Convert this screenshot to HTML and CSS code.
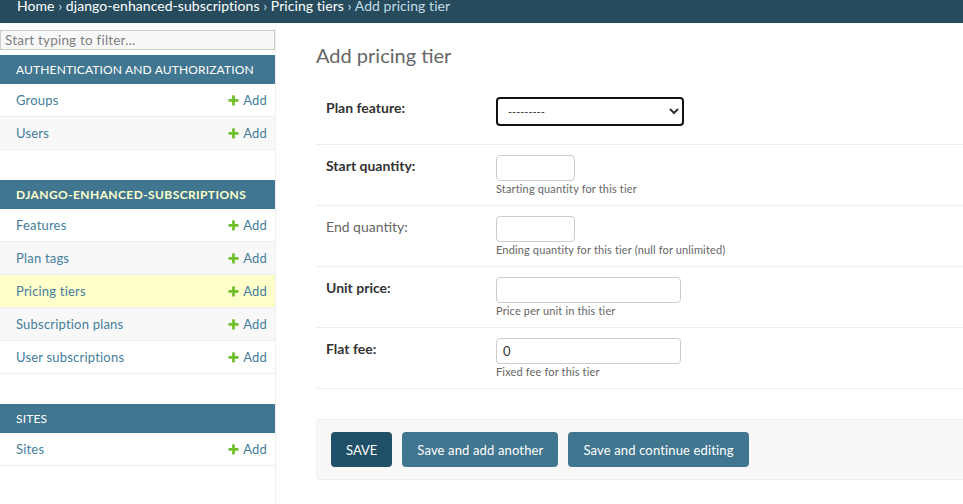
FILE: index.html
```html
<!DOCTYPE html>
<html lang="en">
<head>
<meta charset="utf-8">
<title>Add pricing tier</title>
<link rel="stylesheet" href="styles.css">
</head>
<body>
<div class="breadcrumbs"><a href="#">Home</a> › <a href="#">django-enhanced-subscriptions</a> › <a href="#">Pricing tiers</a> › Add pricing tier</div>
<div class="page">
  <nav class="sidebar">
    <input class="nav-filter" type="search" placeholder="Start typing to filter…">
    <div class="module">
      <div class="caption">Authentication and Authorization</div>
      <div class="row"><a class="model" href="#">Groups</a><a class="addlink" href="#"><svg class="plus" viewBox="0 0 1792 1792"><path d="M1600 796v192q0 40-28 68t-68 28h-416v416q0 40-28 68t-68 28h-192q-40 0-68-28t-28-68v-416h-416q-40 0-68-28t-28-68v-192q0-40 28-68t68-28h416v-416q0-40 28-68t68-28h192q40 0 68 28t28 68v416h416q40 0 68 28t28 68z"/></svg>Add</a></div>
      <div class="row alt"><a class="model" href="#">Users</a><a class="addlink" href="#"><svg class="plus" viewBox="0 0 1792 1792"><path d="M1600 796v192q0 40-28 68t-68 28h-416v416q0 40-28 68t-68 28h-192q-40 0-68-28t-28-68v-416h-416q-40 0-68-28t-28-68v-192q0-40 28-68t68-28h416v-416q0-40 28-68t68-28h192q40 0 68 28t28 68v416h416q40 0 68 28t28 68z"/></svg>Add</a></div>
    </div>
    <div class="module">
      <div class="caption current">django-enhanced-subscriptions</div>
      <div class="row"><a class="model" href="#">Features</a><a class="addlink" href="#"><svg class="plus" viewBox="0 0 1792 1792"><path d="M1600 796v192q0 40-28 68t-68 28h-416v416q0 40-28 68t-68 28h-192q-40 0-68-28t-28-68v-416h-416q-40 0-68-28t-28-68v-192q0-40 28-68t68-28h416v-416q0-40 28-68t68-28h192q40 0 68 28t28 68v416h416q40 0 68 28t28 68z"/></svg>Add</a></div>
      <div class="row alt"><a class="model" href="#">Plan tags</a><a class="addlink" href="#"><svg class="plus" viewBox="0 0 1792 1792"><path d="M1600 796v192q0 40-28 68t-68 28h-416v416q0 40-28 68t-68 28h-192q-40 0-68-28t-28-68v-416h-416q-40 0-68-28t-28-68v-192q0-40 28-68t68-28h416v-416q0-40 28-68t68-28h192q40 0 68 28t28 68v416h416q40 0 68 28t28 68z"/></svg>Add</a></div>
      <div class="row selected"><a class="model" href="#">Pricing tiers</a><a class="addlink" href="#"><svg class="plus" viewBox="0 0 1792 1792"><path d="M1600 796v192q0 40-28 68t-68 28h-416v416q0 40-28 68t-68 28h-192q-40 0-68-28t-28-68v-416h-416q-40 0-68-28t-28-68v-192q0-40 28-68t68-28h416v-416q0-40 28-68t68-28h192q40 0 68 28t28 68v416h416q40 0 68 28t28 68z"/></svg>Add</a></div>
      <div class="row alt"><a class="model" href="#">Subscription plans</a><a class="addlink" href="#"><svg class="plus" viewBox="0 0 1792 1792"><path d="M1600 796v192q0 40-28 68t-68 28h-416v416q0 40-28 68t-68 28h-192q-40 0-68-28t-28-68v-416h-416q-40 0-68-28t-28-68v-192q0-40 28-68t68-28h416v-416q0-40 28-68t68-28h192q40 0 68 28t28 68v416h416q40 0 68 28t28 68z"/></svg>Add</a></div>
      <div class="row"><a class="model" href="#">User subscriptions</a><a class="addlink" href="#"><svg class="plus" viewBox="0 0 1792 1792"><path d="M1600 796v192q0 40-28 68t-68 28h-416v416q0 40-28 68t-68 28h-192q-40 0-68-28t-28-68v-416h-416q-40 0-68-28t-28-68v-192q0-40 28-68t68-28h416v-416q0-40 28-68t68-28h192q40 0 68 28t28 68v416h416q40 0 68 28t28 68z"/></svg>Add</a></div>
    </div>
    <div class="module">
      <div class="caption">Sites</div>
      <div class="row"><a class="model" href="#">Sites</a><a class="addlink" href="#"><svg class="plus" viewBox="0 0 1792 1792"><path d="M1600 796v192q0 40-28 68t-68 28h-416v416q0 40-28 68t-68 28h-192q-40 0-68-28t-28-68v-416h-416q-40 0-68-28t-28-68v-192q0-40 28-68t68-28h416v-416q0-40 28-68t68-28h192q40 0 68 28t28 68v416h416q40 0 68 28t28 68z"/></svg>Add</a></div>
    </div>
  </nav>
  <main class="content">
    <h1>Add pricing tier</h1>
    <form class="form">
      <div class="form-row first">
        <label class="required">Plan feature:</label>
        <div class="field"><select class="select"><option>---------</option></select></div>
      </div>
      <div class="form-row">
        <label class="required">Start quantity:</label>
        <div class="field"><input class="text small" type="text"><div class="help">Starting quantity for this tier</div></div>
      </div>
      <div class="form-row">
        <label>End quantity:</label>
        <div class="field"><input class="text small" type="text"><div class="help">Ending quantity for this tier (null for unlimited)</div></div>
      </div>
      <div class="form-row">
        <label class="required">Unit price:</label>
        <div class="field"><input class="text wide" type="text"><div class="help">Price per unit in this tier</div></div>
      </div>
      <div class="form-row">
        <label class="required">Flat fee:</label>
        <div class="field"><input class="text wide" type="text" value="0"><div class="help">Fixed fee for this tier</div></div>
      </div>
      <div class="submit-row">
        <button class="btn default" type="button">SAVE</button>
        <button class="btn" type="button">Save and add another</button>
        <button class="btn" type="button">Save and continue editing</button>
      </div>
    </form>
  </main>
</div>
</body>
</html>
```
FILE: styles.css
```css
html, body {
  margin: 0;
  padding: 0;
  background: #fff;
  overflow: hidden;
}
body {
  font-family: Lato, "Liberation Sans", sans-serif;
  color: #333;
}
a {
  text-decoration: none;
}

.breadcrumbs {
  background: #264b5d;
  color: #c4dce8;
  height: 23px;
  padding: 0 17px;
  font-size: 14px;
  line-height: 12px;
  letter-spacing: 0.06px;
  white-space: nowrap;
}
.breadcrumbs a {
  color: #fff;
}

.page {
  display: flex;
  width: 1060px;
  min-height: calc(100vh - 23px);
}

.sidebar {
  width: 275px;
  flex-shrink: 0;
  border-right: 1px solid #eee;
}
.nav-filter {
  display: block;
  box-sizing: border-box;
  width: 100%;
  height: 20px;
  margin: 7px 0 5px;
  padding: 0 4px;
  border: 1px solid #ccc;
  border-radius: 0;
  background: #f8f8f8;
  font-family: Lato, sans-serif;
  font-size: 13.5px;
  letter-spacing: 0.2px;
  color: #333;
  outline: none;
  -webkit-appearance: none;
  appearance: none;
}
.nav-filter::placeholder {
  color: #808080;
}
.module {
  margin-bottom: 30px;
}
.caption {
  background: #417690;
  color: #fff;
  height: 29px;
  line-height: 29px;
  padding: 0 16px;
  font-size: 12px;
  letter-spacing: 0.15px;
  text-transform: uppercase;
  white-space: nowrap;
}
.caption.current {
  color: #ffc;
  font-weight: bold;
  letter-spacing: 0.4px;
}
.row {
  display: flex;
  align-items: center;
  justify-content: space-between;
  height: 32px;
  padding: 0 8px 0 16px;
  border-bottom: 1px solid #eee;
  font-size: 13px;
  letter-spacing: 0.2px;
  background: #fff;
}
.row.alt {
  background: #f8f8f8;
}
.row.selected {
  background: #ffc;
}
.model, .addlink {
  color: #447e9b;
}
.addlink {
  display: flex;
  align-items: center;
  gap: 3px;
}
.plus {
  width: 13px;
  height: 13px;
  fill: #70bf2b;
}

.content {
  flex: 1;
  padding: 20px 0 0 40px;
}
h1 {
  margin: 0 0 20px;
  font-size: 20px;
  line-height: 24px;
  font-weight: 400;
  color: #666;
}
.form-row {
  display: flex;
  padding: 10px;
  border-bottom: 1px solid #eee;
}
.form-row.first {
  padding-bottom: 18px;
}
.form-row label {
  width: 160px;
  flex-shrink: 0;
  padding: 2px 10px 0 0;
  font-size: 14px;
  line-height: 17px;
  color: #666;
}
.form-row label.required {
  color: #333;
  font-weight: bold;
}
.field {
  display: flex;
  flex-direction: column;
  align-items: flex-start;
}
.select {
  box-sizing: border-box;
  width: 188px;
  height: 29px;
  padding: 0 0 0 6px;
  border: 2px solid #111;
  border-radius: 4px;
  background: #fff;
  font-family: Lato, sans-serif;
  font-size: 11px;
  color: #333;
}
.text {
  box-sizing: border-box;
  height: 26px;
  padding: 0 6px;
  border: 1px solid #ccc;
  border-radius: 4px;
  font-family: Lato, sans-serif;
  font-size: 13px;
  color: #333;
  background: #fff;
}
.text.small {
  width: 79px;
}
.text.wide {
  width: 185px;
}
.help {
  margin-top: 1px;
  font-size: 11px;
  line-height: 13px;
  letter-spacing: 0.15px;
  color: #666;
}
.submit-row {
  display: flex;
  gap: 10px;
  margin-top: 30px;
  padding: 12px 14px;
  background: #f8f8f8;
  border: 1px solid #eee;
  border-radius: 4px;
}
.btn {
  height: 35px;
  padding: 0 15px;
  border: none;
  border-radius: 4px;
  background: #417690;
  color: #fff;
  font-family: Lato, sans-serif;
  font-size: 13px;
  letter-spacing: 0.15px;
}
.btn.default {
  background: #205067;
  letter-spacing: 0;
}
```
